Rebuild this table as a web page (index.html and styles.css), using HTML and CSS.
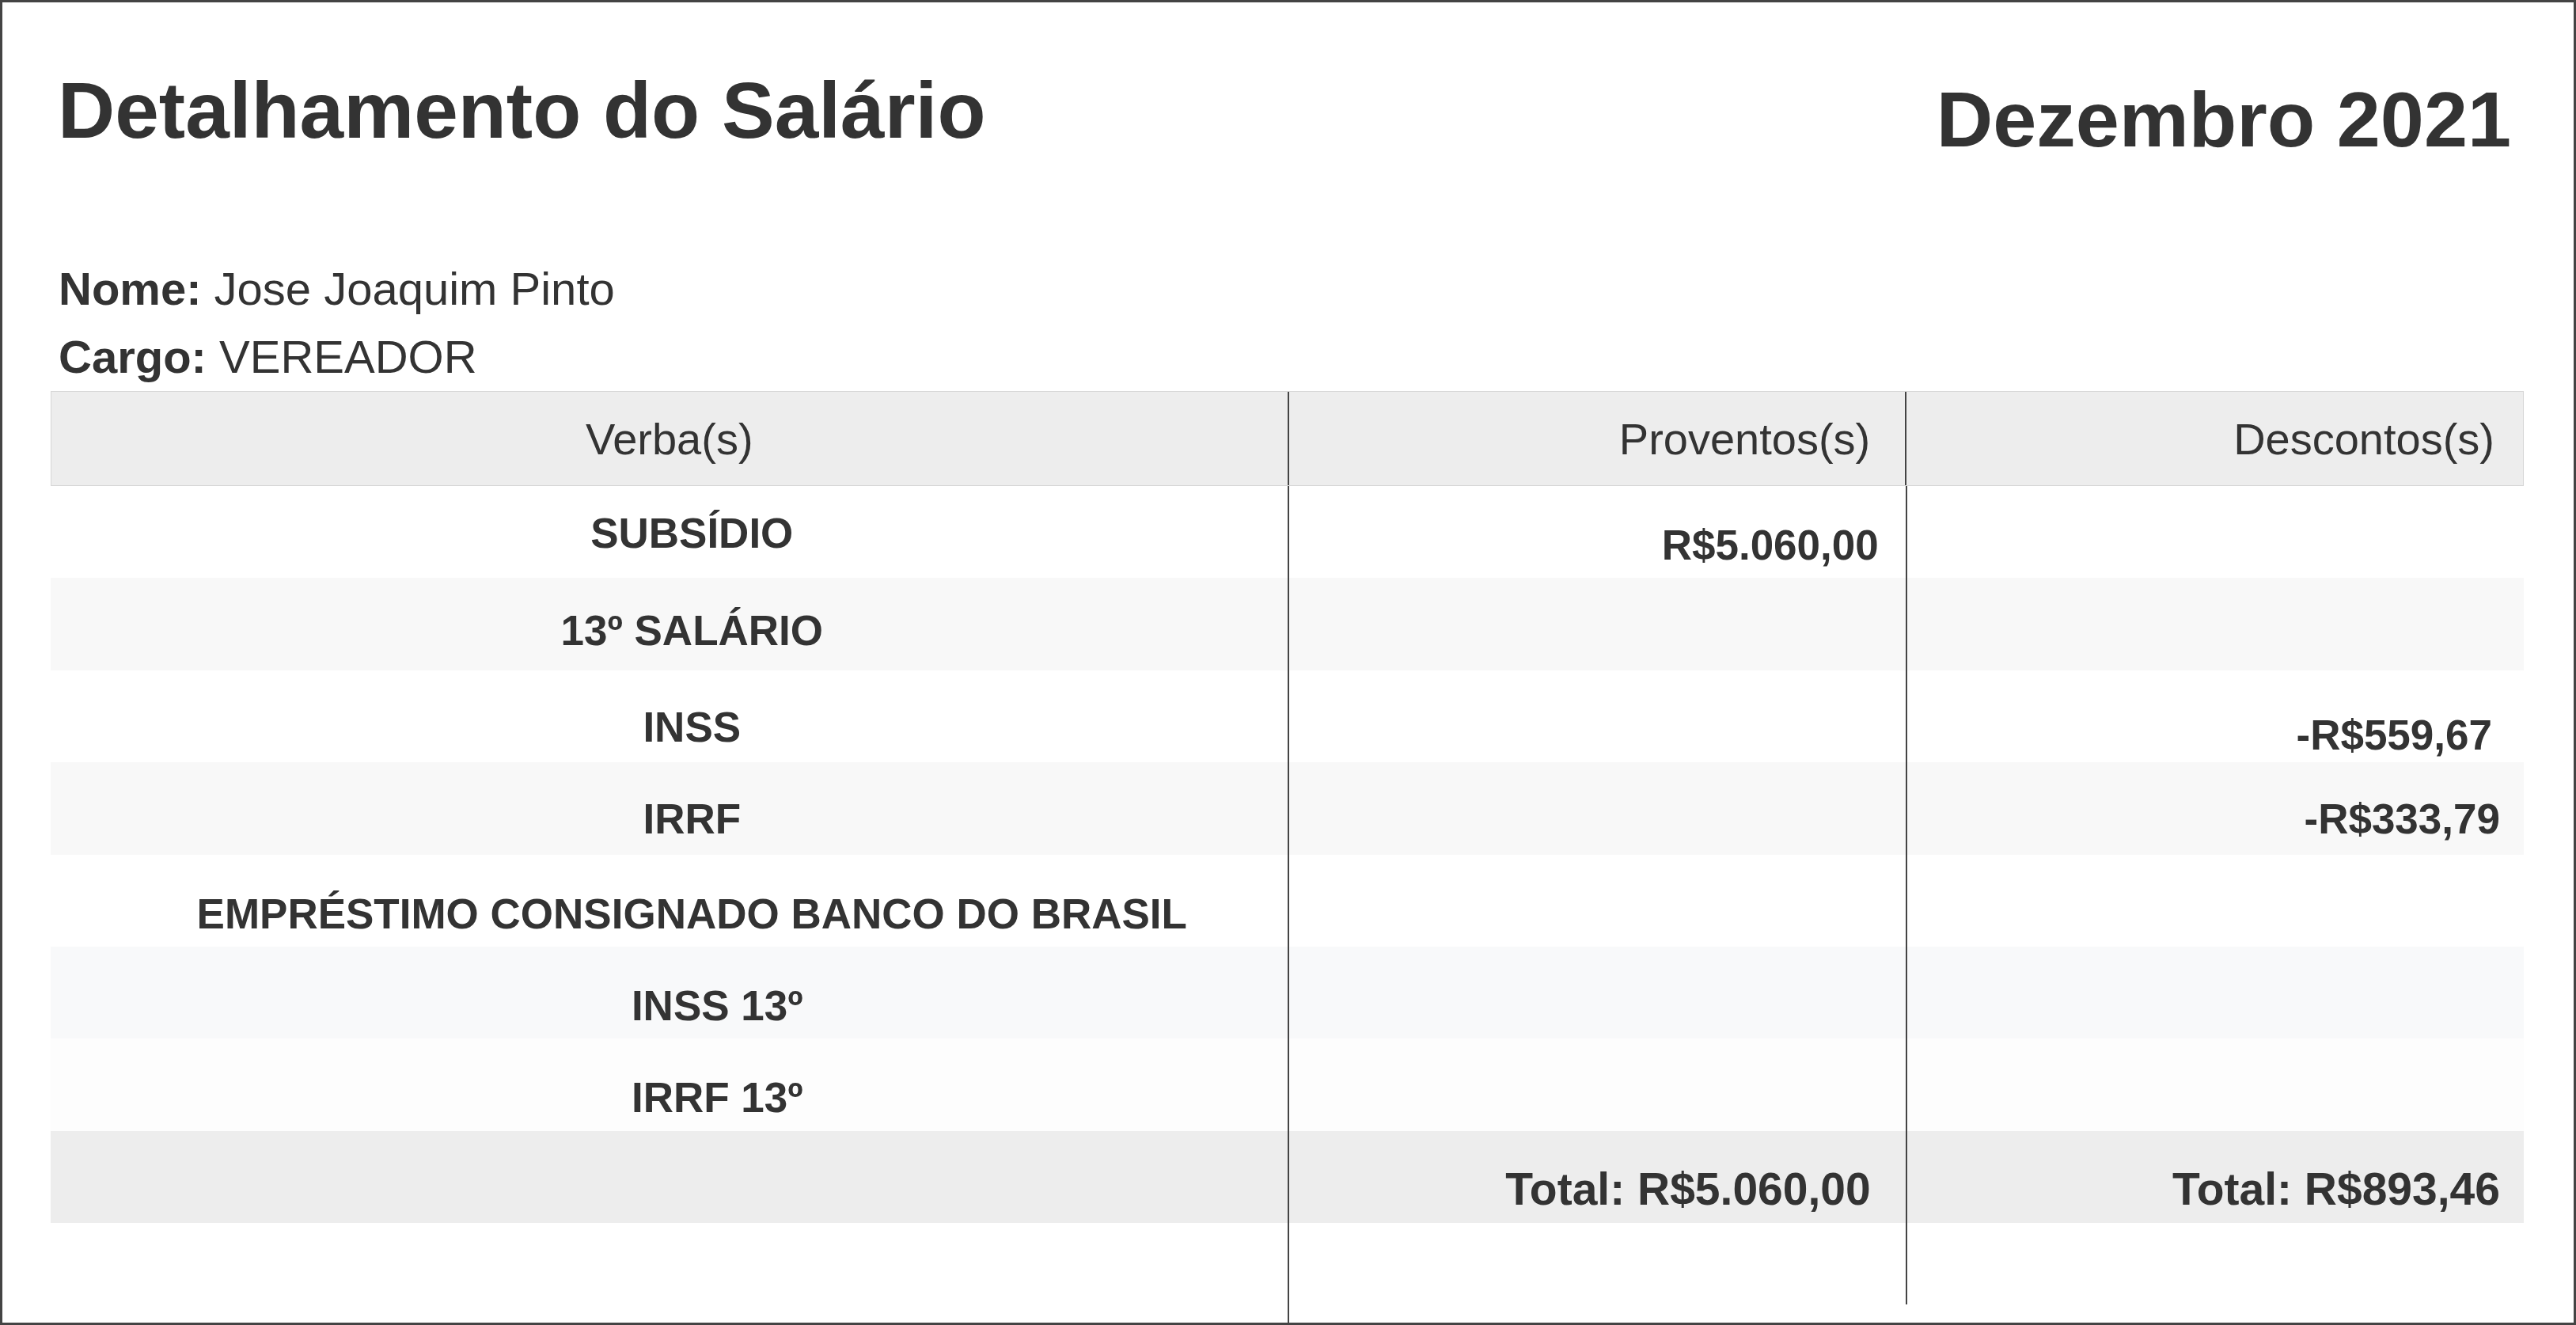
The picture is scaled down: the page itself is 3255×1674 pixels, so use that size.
FILE: index.html
```html
<!DOCTYPE html>
<html lang="pt-BR">
<head>
    <meta charset="UTF-8">
    <meta name="viewport" content="width=device-width, initial-scale=1.0">
    <link rel="stylesheet" href="styles.css">
    <title>Detalhamento do Salário</title>
</head>
<body>
    <div class="page">
        <div class="top">
            <h1 class="title">Detalhamento do Salário</h1>
            <h1 class="month">Dezembro 2021</h1>
        </div>
        <div class="info">
            <p><b>Nome:</b> Jose Joaquim Pinto</p>
            <p><b>Cargo:</b> VEREADOR</p>
        </div>
        <div class="table">
            <div class="row head">
                <div class="cell verba">Verba(s)</div>
                <div class="cell num prov">Proventos(s)</div>
                <div class="cell num desc">Descontos(s)</div>
            </div>
            <div class="row">
                <div class="cell verba first">SUBSÍDIO</div>
                <div class="cell num">R$5.060,00</div>
                <div class="cell num"></div>
            </div>
            <div class="row odd">
                <div class="cell verba second">13º SALÁRIO</div>
                <div class="cell num"></div>
                <div class="cell num"></div>
            </div>
            <div class="row">
                <div class="cell verba mid">INSS</div>
                <div class="cell num"></div>
                <div class="cell num low">-R$559,67</div>
            </div>
            <div class="row odd">
                <div class="cell verba mid">IRRF</div>
                <div class="cell num"></div>
                <div class="cell num wide mid">-R$333,79</div>
            </div>
            <div class="row">
                <div class="cell verba">EMPRÉSTIMO CONSIGNADO BANCO DO BRASIL</div>
                <div class="cell num"></div>
                <div class="cell num"></div>
            </div>
            <div class="row blue">
                <div class="cell verba shift">INSS 13º</div>
                <div class="cell num"></div>
                <div class="cell num"></div>
            </div>
            <div class="row light">
                <div class="cell verba shift">IRRF 13º</div>
                <div class="cell num"></div>
                <div class="cell num"></div>
            </div>
            <div class="row total">
                <div class="cell verba"></div>
                <div class="cell num">Total: R$5.060,00</div>
                <div class="cell num wide">Total: R$893,46</div>
            </div>
        </div>
        <div class="rest">
            <div></div>
            <div class="line"></div>
            <div class="line short"></div>
        </div>
    </div>
</body>
</html>
```

FILE: styles.css
```css
html, body {
  margin: 0;
  padding: 0;
  background: #fff;
}
.page {
  height: 100vh;
  box-sizing: border-box;
  border: 3px solid #444;
  padding: 86px 63px 0 61px;
  display: flex;
  flex-direction: column;
  font-family: "Liberation Sans", Arial, sans-serif;
  color: #333;
}
.top {
  display: flex;
  justify-content: space-between;
  align-items: flex-start;
  padding: 0 16px 0 9px;
}
.title {
  margin: 0;
  font-size: 100px;
  line-height: 1;
}
.month {
  margin: 12px 0 0 0;
  font-size: 99px;
  line-height: 1;
}
.info {
  margin-top: 122px;
  padding-left: 10px;
  font-size: 58px;
}
.info p {
  margin: 0;
  line-height: 86px;
}
.row {
  display: grid;
  grid-template-columns: 2fr 1fr 1fr;
  height: 116.4px;
  box-sizing: border-box;
}
.cell {
  padding-top: 48px;
  font-size: 53px;
  font-weight: bold;
  line-height: 1;
  white-space: nowrap;
}
.cell.num {
  text-align: right;
  padding-right: 34px;
  border-left: 2px solid #444;
}
.verba {
  text-align: center;
  padding-left: 58px;
}
.cell.first {
  padding-top: 33px;
}
.cell.second {
  padding-top: 40px;
}
.cell.mid {
  padding-top: 45px;
}
.cell.shift {
  padding-left: 122px;
}
.cell.low {
  padding-top: 55px;
  padding-right: 40px;
}
.cell.wide {
  padding-right: 30px;
}
.head {
  height: 120px;
  background: #ededed;
  border: 1px solid #d6d6d6;
}
.head .cell {
  padding-top: 32px;
  font-size: 56px;
  font-weight: normal;
}
.head .verba {
  padding-left: 0;
}
.head .cell.prov {
  padding-right: 44px;
}
.head .cell.desc {
  padding-right: 36px;
}
.odd {
  background: #f8f8f8;
}
.blue {
  background: #f8f9fa;
}
.light {
  background: #fdfdfd;
}
.total {
  background: #ededed;
}
.total .cell {
  padding-top: 45px;
  font-size: 57px;
}
.total .cell.num {
  padding-right: 44px;
}
.total .cell.wide {
  padding-right: 30px;
}
.rest {
  flex: 1;
  display: grid;
  grid-template-columns: 2fr 1fr 1fr;
  align-items: stretch;
}
.line {
  border-left: 2px solid #444;
}
.line.short {
  align-self: start;
  height: 103px;
}
```
